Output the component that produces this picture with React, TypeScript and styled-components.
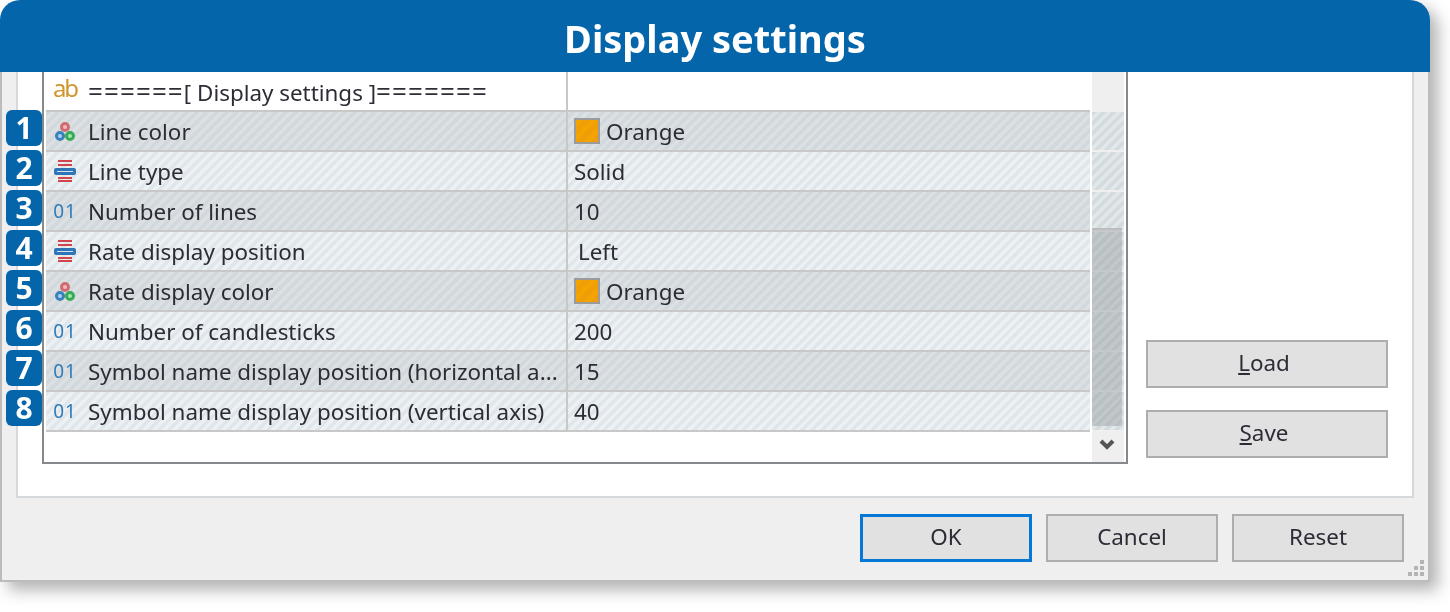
import React from "react";
import styled, { createGlobalStyle } from "styled-components";

const GlobalStyle = createGlobalStyle`
  html, body {
    margin: 0;
    padding: 0;
    background: #fff;
    font-family: "Noto Sans", "Open Sans", sans-serif;
  }
  #root {
    padding-bottom: 30px;
  }
`;

const Dialog = styled.div`
  position: relative;
  width: 1430px;
  border-radius: 20px 20px 0 0;
  filter: drop-shadow(8px 8px 8px rgba(0, 0, 0, 0.3));
`;

const Header = styled.header`
  height: 72px;
  background: #0465aa;
  border-radius: 20px 20px 0 0;
  color: #fff;
  font-size: 38px;
  font-weight: 700;
  line-height: 76px;
  text-align: center;
`;

const Body = styled.div`
  height: 508px;
  background: #efefef;
  border: 2px solid #bcbcbc;
  border-top: 0;
  padding: 0 14px;
`;

const Panel = styled.div`
  display: flex;
  height: 424px;
  background: #fff;
  border: 2px solid #d5d9dc;
  border-top: 0;
  padding-left: 24px;
`;

const TableBox = styled.div`
  display: flex;
  width: 1080px;
  height: 390px;
  border: 2px solid #85898e;
  border-top: 0;
  padding-left: 2px;
`;

const Rows = styled.div`
  width: 1044px;
  margin-right: 2px;
`;

const Row = styled.div<{ $shade?: "dark" | "light" }>`
  position: relative;
  display: flex;
  height: 40px;
  box-sizing: border-box;
  border-bottom: 2px solid #c8c8c8;
  font-size: 22.4px;
  line-height: 38px;
  color: #2c2c36;
  background: ${(p) =>
    p.$shade === "dark"
      ? "repeating-linear-gradient(135deg, #d2d9dc 0 3.5px, #dde0e2 3.5px 7px)"
      : p.$shade === "light"
      ? "repeating-linear-gradient(135deg, #e0e6ea 0 3.5px, #ecf1f4 3.5px 7px)"
      : "#fff"};
`;

const NameCell = styled.div`
  display: flex;
  align-items: center;
  flex: none;
  width: 522px;
  box-sizing: border-box;
  border-right: 2px solid #c8c8c8;
  margin-bottom: -2px;
  white-space: nowrap;
`;

const IconSlot = styled.span`
  display: flex;
  justify-content: center;
  align-items: center;
  flex: none;
  width: 38px;
  margin-right: 4px;
  margin-bottom: 2px;
`;

const Equals = styled.span`
  font-size: 26px;
  letter-spacing: 1.1px;
`;

const ValueCell = styled.div<{ $indent?: number }>`
  display: flex;
  align-items: center;
  gap: 6px;
  padding-top: 2px;
  padding-left: ${(p) => p.$indent ?? 6}px;
`;

const Swatch = styled.span`
  width: 22px;
  height: 22px;
  margin-bottom: 2px;
  border: 2px solid #9b9b9b;
  background: repeating-linear-gradient(135deg, #f5a300 0 5px, #ee9f08 5px 10px);
`;

const Badge = styled.span`
  position: absolute;
  left: -40px;
  top: -2px;
  width: 36px;
  height: 36px;
  border-radius: 6px;
  background: #0465aa;
  color: #fff;
  font-size: 30px;
  font-weight: 700;
  line-height: 35px;
  text-align: center;
`;

const AbIcon = styled.span`
  color: #cf962f;
  font-size: 24px;
  letter-spacing: -2px;
  line-height: 24px;
  margin-top: -6px;
`;

const NumIcon = styled.span`
  color: #2f7cb8;
  font-size: 19px;
  line-height: 24px;
  letter-spacing: 1px;
`;

const Scrollbar = styled.div`
  position: relative;
  width: 32px;
  height: 390px;
  background: #efefef;
`;

const TrackCell = styled.div`
  height: 38px;
  margin-bottom: 2px;
  background: repeating-linear-gradient(135deg, #d3dbde 0 3.5px, #e2e7ea 3.5px 7px);
`;

const TrackTop = styled.div`
  height: 40px;
`;

const Thumb = styled.div`
  position: absolute;
  top: 156px;
  left: 0;
  width: 30px;
  height: 198px;
  box-sizing: border-box;
  border-top: 2px solid #bcbcbc;
  background:
    repeating-linear-gradient(180deg, #c6c9cb 0 2px, transparent 2px 40px),
    repeating-linear-gradient(135deg, #b8c0c3 0 3.5px, #c2c7ca 3.5px 7px);
`;

const ArrowDown = styled.svg`
  position: absolute;
  left: 7px;
  top: 366px;
`;

const Side = styled.div`
  display: flex;
  flex-direction: column;
  gap: 22px;
  padding: 268px 0 0 18px;
`;

const Button = styled.button<{ $primary?: boolean }>`
  width: 172px;
  height: 48px;
  padding: 0 0 4px;
  box-sizing: border-box;
  background: #e1e1e1;
  border: ${(p) => (p.$primary ? "3px solid #0578d7" : "2px solid #adadad")};
  color: #2c2c36;
  font-family: inherit;
  font-size: 22.4px;
`;

const SideButton = styled(Button)`
  width: 242px;
  padding-right: 6px;
`;

const Footer = styled.div`
  display: flex;
  justify-content: flex-end;
  gap: 14px;
  margin-top: 16px;
  padding-right: 10px;
`;

const Grip = styled.svg`
  position: absolute;
  right: 6px;
  bottom: 6px;
`;

type Kind = "color" | "enum" | "num";

const settings: { name: string; value: string; kind: Kind; swatch?: boolean; indent?: number }[] = [
  { name: "Line color", value: "Orange", kind: "color", swatch: true },
  { name: "Line type", value: "Solid", kind: "enum" },
  { name: "Number of lines", value: "10", kind: "num" },
  { name: "Rate display position", value: "Left", kind: "enum", indent: 10 },
  { name: "Rate display color", value: "Orange", kind: "color", swatch: true },
  { name: "Number of candlesticks", value: "200", kind: "num" },
  { name: "Symbol name display position (horizontal a...", value: "15", kind: "num" },
  { name: "Symbol name display position (vertical axis)", value: "40", kind: "num" },
];

function ColorIcon() {
  return (
    <svg width="20" height="19" viewBox="0 0 20 19">
      <circle cx="10" cy="5" r="3.5" fill="#f2b8b8" stroke="#cf6c72" strokeWidth="3" />
      <circle cx="5" cy="14" r="3.5" fill="#a9d0ee" stroke="#3a82bd" strokeWidth="3" />
      <circle cx="15" cy="14" r="3.5" fill="#a5e6b2" stroke="#35ad52" strokeWidth="3" />
    </svg>
  );
}

function EnumIcon() {
  return (
    <svg width="22" height="22" viewBox="0 0 22 22">
      <rect x="4" y="0" width="14" height="2" fill="#d0464c" />
      <rect x="4" y="4" width="14" height="2" fill="#d0464c" />
      <rect x="0" y="8" width="22" height="7" rx="2" fill="#2f74b5" />
      <rect x="3" y="11" width="16" height="1" fill="#cfe3f3" />
      <rect x="4" y="17" width="14" height="2" fill="#d0464c" />
      <rect x="4" y="20" width="14" height="2" fill="#d0464c" />
    </svg>
  );
}

function RowIcon({ kind }: { kind: Kind }) {
  if (kind === "color") return <ColorIcon />;
  if (kind === "enum") return <EnumIcon />;
  return <NumIcon>01</NumIcon>;
}

export default function App() {
  return (
    <>
      <GlobalStyle />
      <Dialog>
        <Header>Display settings</Header>
        <Body>
          <Panel>
            <TableBox>
              <Rows>
                <Row>
                  <NameCell>
                    <IconSlot>
                      <AbIcon>ab</AbIcon>
                    </IconSlot>
                    <span>
                      <Equals>======</Equals>[ Display settings ]<Equals>=======</Equals>
                    </span>
                  </NameCell>
                </Row>
                {settings.map((s, i) => (
                  <Row key={s.name} $shade={i % 2 === 0 ? "dark" : "light"}>
                    <Badge>{i + 1}</Badge>
                    <NameCell>
                      <IconSlot>
                        <RowIcon kind={s.kind} />
                      </IconSlot>
                      {s.name}
                    </NameCell>
                    <ValueCell $indent={s.indent}>
                      {s.swatch && <Swatch />}
                      {s.value}
                    </ValueCell>
                  </Row>
                ))}
              </Rows>
              <Scrollbar>
                <TrackTop />
                {settings.map((s) => (
                  <TrackCell key={s.name} />
                ))}
                <Thumb />
                <ArrowDown width="16" height="14" viewBox="0 0 16 14">
                  <path d="M2 3 L8 9 L14 3" fill="none" stroke="#555" strokeWidth="4" />
                </ArrowDown>
              </Scrollbar>
            </TableBox>
            <Side>
              <SideButton>
                <u>L</u>oad
              </SideButton>
              <SideButton>
                <u>S</u>ave
              </SideButton>
            </Side>
          </Panel>
          <Footer>
            <Button $primary>OK</Button>
            <Button>Cancel</Button>
            <Button>Reset</Button>
          </Footer>
        </Body>
        <Grip width="16" height="16" viewBox="0 0 16 16" fill="#b4b4b4">
          <rect x="12" y="0" width="4" height="4" />
          <rect x="6" y="6" width="4" height="4" />
          <rect x="12" y="6" width="4" height="4" />
          <rect x="0" y="12" width="4" height="4" />
          <rect x="6" y="12" width="4" height="4" />
          <rect x="12" y="12" width="4" height="4" />
        </Grip>
      </Dialog>
    </>
  );
}
